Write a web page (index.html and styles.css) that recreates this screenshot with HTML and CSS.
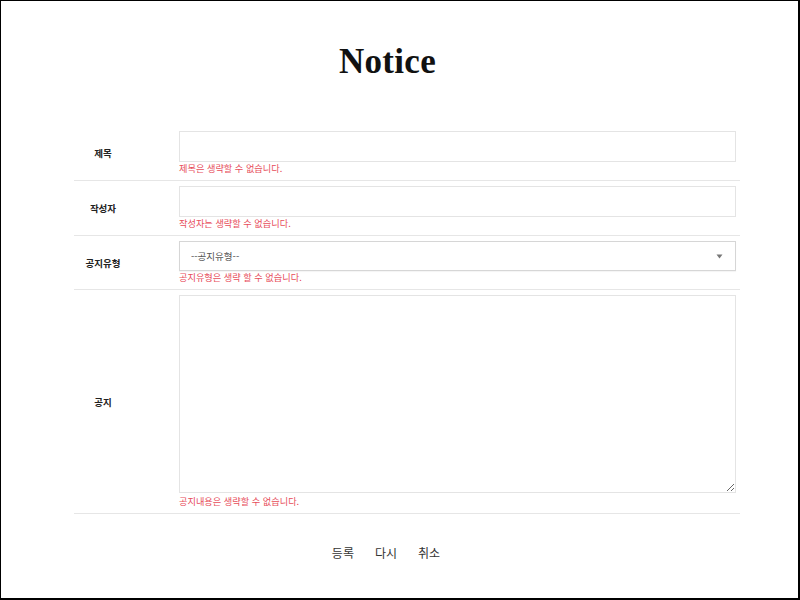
FILE: index.html
```html
<!DOCTYPE html>
<html lang="ko">
<head>
<meta charset="utf-8">
<title>Notice</title>
<link rel="stylesheet" href="styles.css">
</head>
<body>
<div class="frame">
  <h1 class="title">Notice</h1>
  <form class="form">
    <div class="row">
      <label class="label">제목</label>
      <div class="field">
        <input class="input" type="text">
        <p class="error">제목은 생략할 수 없습니다.</p>
      </div>
    </div>
    <div class="row">
      <label class="label">작성자</label>
      <div class="field">
        <input class="input" type="text">
        <p class="error">작성자는 생략할 수 없습니다.</p>
      </div>
    </div>
    <div class="row">
      <label class="label">공지유형</label>
      <div class="field">
        <div class="select-wrap">
          <select class="select"><option>--공지유형--</option></select>
          <svg class="arrow" width="7" height="5" viewBox="0 0 7 5"><path d="M0.5 0.5 H6.5 L3.5 4.5 Z" fill="#777"/></svg>
        </div>
        <p class="error">공지유형은 생략 할 수 없습니다.</p>
      </div>
    </div>
    <div class="row">
      <label class="label">공지</label>
      <div class="field">
        <textarea class="textarea"></textarea>
        <p class="error error-ta">공지내용은 생략할 수 없습니다.</p>
      </div>
    </div>
    <div class="buttons">
      <button type="button" class="btn">등록</button>
      <button type="reset" class="btn">다시</button>
      <button type="button" class="btn">취소</button>
    </div>
  </form>
</div>
</body>
</html>
```
FILE: styles.css
```css
html, body {
  margin: 0;
  padding: 0;
  background: #fff;
}
.frame {
  box-sizing: border-box;
  width: 800px;
  height: 600px;
  border-style: solid;
  border-color: #000;
  border-width: 1px 2px 2px 1px;
  font-family: "Noto Sans CJK KR", "Noto Sans", sans-serif;
  color: #222;
  overflow: hidden;
}
.title {
  margin: 0;
  padding-top: 39px;
  width: 773px;
  text-align: center;
  font-family: "Liberation Serif", "DejaVu Serif", serif;
  font-weight: bold;
  font-size: 35px;
  line-height: 44px;
  color: #111;
  letter-spacing: 0.3px;
}
.form {
  margin: 42px 0 0 73px;
  width: 666px;
}
.row {
  display: grid;
  grid-template-columns: 58px 557px;
  column-gap: 47px;
  align-items: center;
  border-bottom: 1px solid #e6e6e6;
}
.label {
  text-align: center;
  font-size: 9.5px;
  font-weight: bold;
  color: #222;
}
.field {
  padding: 5px 0 5px;
  display: flex;
  flex-direction: column;
}
.input, .select, .textarea {
  box-sizing: border-box;
  width: 557px;
  margin: 0;
  border: 1px solid #e4e4e4;
  background: #fff;
  font-family: "Noto Sans CJK KR", "Noto Sans", sans-serif;
  outline: none;
}
.input {
  height: 31px;
}
.select-wrap {
  position: relative;
}
.select {
  display: block;
  height: 30px;
  appearance: none;
  -webkit-appearance: none;
  border-color: #d6d6d6;
  padding: 0 0 0 11px;
  font-size: 9.5px;
  color: #555;
  box-shadow: 0 1px 1px rgba(0,0,0,0.04);
}
.arrow {
  position: absolute;
  right: 13px;
  top: 13px;
}
.textarea {
  display: block;
  height: 198px;
  resize: both;
}
.error {
  margin: 0;
  font-size: 9.2px;
  line-height: 13px;
  color: #e74c5a;
}
.error-ta {
  margin-top: 2px;
}
.buttons {
  display: flex;
  justify-content: center;
  gap: 21px;
  margin-top: 31px;
  margin-left: -42px;
}
.btn {
  border: none;
  background: none;
  padding: 0;
  font-family: "Noto Sans CJK KR", "Noto Sans", sans-serif;
  font-size: 12px;
  line-height: 16px;
  color: #333;
  cursor: pointer;
}
```
